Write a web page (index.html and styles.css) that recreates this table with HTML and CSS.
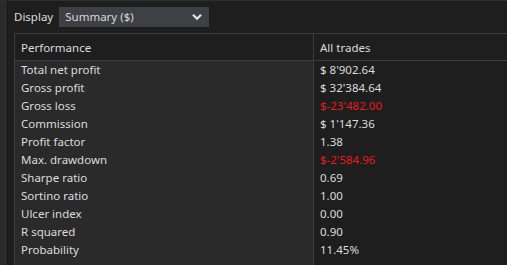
FILE: index.html
```html
<!DOCTYPE html>
<html>
<head>
<meta charset="utf-8">
<link rel="stylesheet" href="styles.css">
</head>
<body>
<div class="app">
  <div class="side"></div>
  <div class="main">
    <div class="toolbar">
      <span class="label">Display</span>
      <div class="select">
        <span>Summary ($)</span>
        <svg class="chev" width="12" height="8" viewBox="0 0 12 8"><path d="M2 1.8 L6 5.8 L10 1.8" fill="none" stroke="#e6e6e6" stroke-width="2.2"/></svg>
      </div>
    </div>
    <div class="table">
      <div class="cell head first">Performance</div>
      <div class="cell head">All trades</div>

      <div class="cell first">Total net profit</div><div class="cell">$ 8'902.64</div>
      <div class="cell first">Gross profit</div><div class="cell">$ 32'384.64</div>
      <div class="cell first">Gross loss</div><div class="cell neg">$-23'482.00</div>
      <div class="cell first">Commission</div><div class="cell">$ 1'147.36</div>
      <div class="cell first">Profit factor</div><div class="cell">1.38</div>
      <div class="cell first">Max. drawdown</div><div class="cell neg">$-2'584.96</div>
      <div class="cell first">Sharpe ratio</div><div class="cell">0.69</div>
      <div class="cell first">Sortino ratio</div><div class="cell">1.00</div>
      <div class="cell first">Ulcer index</div><div class="cell">0.00</div>
      <div class="cell first">R squared</div><div class="cell">0.90</div>
      <div class="cell first">Probability</div><div class="cell">11.45%</div>
      <div class="cell first filler"></div><div class="cell filler"></div>
    </div>
  </div>
</div>
</body>
</html>
```
FILE: styles.css
```css
html, body {
  margin: 0;
  padding: 0;
  height: 100%;
  overflow: hidden;
  background: #1e1e1e;
}
body {
  font-family: "Noto Sans", "Open Sans", sans-serif;
  font-size: 11.5px;
  color: #dcdcdc;
}
.app {
  display: flex;
  height: 100vh;
  border-top: 1px solid #2e2e2e;
  box-sizing: border-box;
}
.side {
  width: 7px;
  background: #2b2b2b;
  border-right: 1px solid #171717;
  flex: none;
}
.main {
  flex: 1;
  display: flex;
  flex-direction: column;
  padding: 6px 0 0 6px;
  min-width: 0;
}
.toolbar {
  display: flex;
  align-items: center;
  height: 20px;
  margin-bottom: 6px;
}
.label {
  margin-right: 6px;
  line-height: 20px;
  padding-bottom: 1px;
}
.select {
  width: 150px;
  height: 20px;
  background: #3f3f46;
  display: flex;
  align-items: center;
  justify-content: space-between;
  padding: 0 6px 1px 6px;
  box-sizing: border-box;
  color: #d8d8d8;
}
.table {
  flex: 1;
  display: grid;
  grid-template-columns: 299px 1fr;
  grid-template-rows: 27px repeat(11, 18px) 1fr;
  border-top: 1px solid #3c3c3c;
  border-left: 1px solid #3c3c3c;
}
.cell {
  padding-left: 6px;
  padding-bottom: 1px;
  display: flex;
  align-items: center;
  white-space: nowrap;
  background: #1e1e1e;
}
.cell.first {
  background: #2a2a2a;
  border-right: 1px solid #3c3c3c;
}
.cell.head {
  background: #1e1e1e;
  border-bottom: 1px solid #3c3c3c;
  padding-bottom: 0;
}
.neg {
  color: #e81a1a;
}
```
